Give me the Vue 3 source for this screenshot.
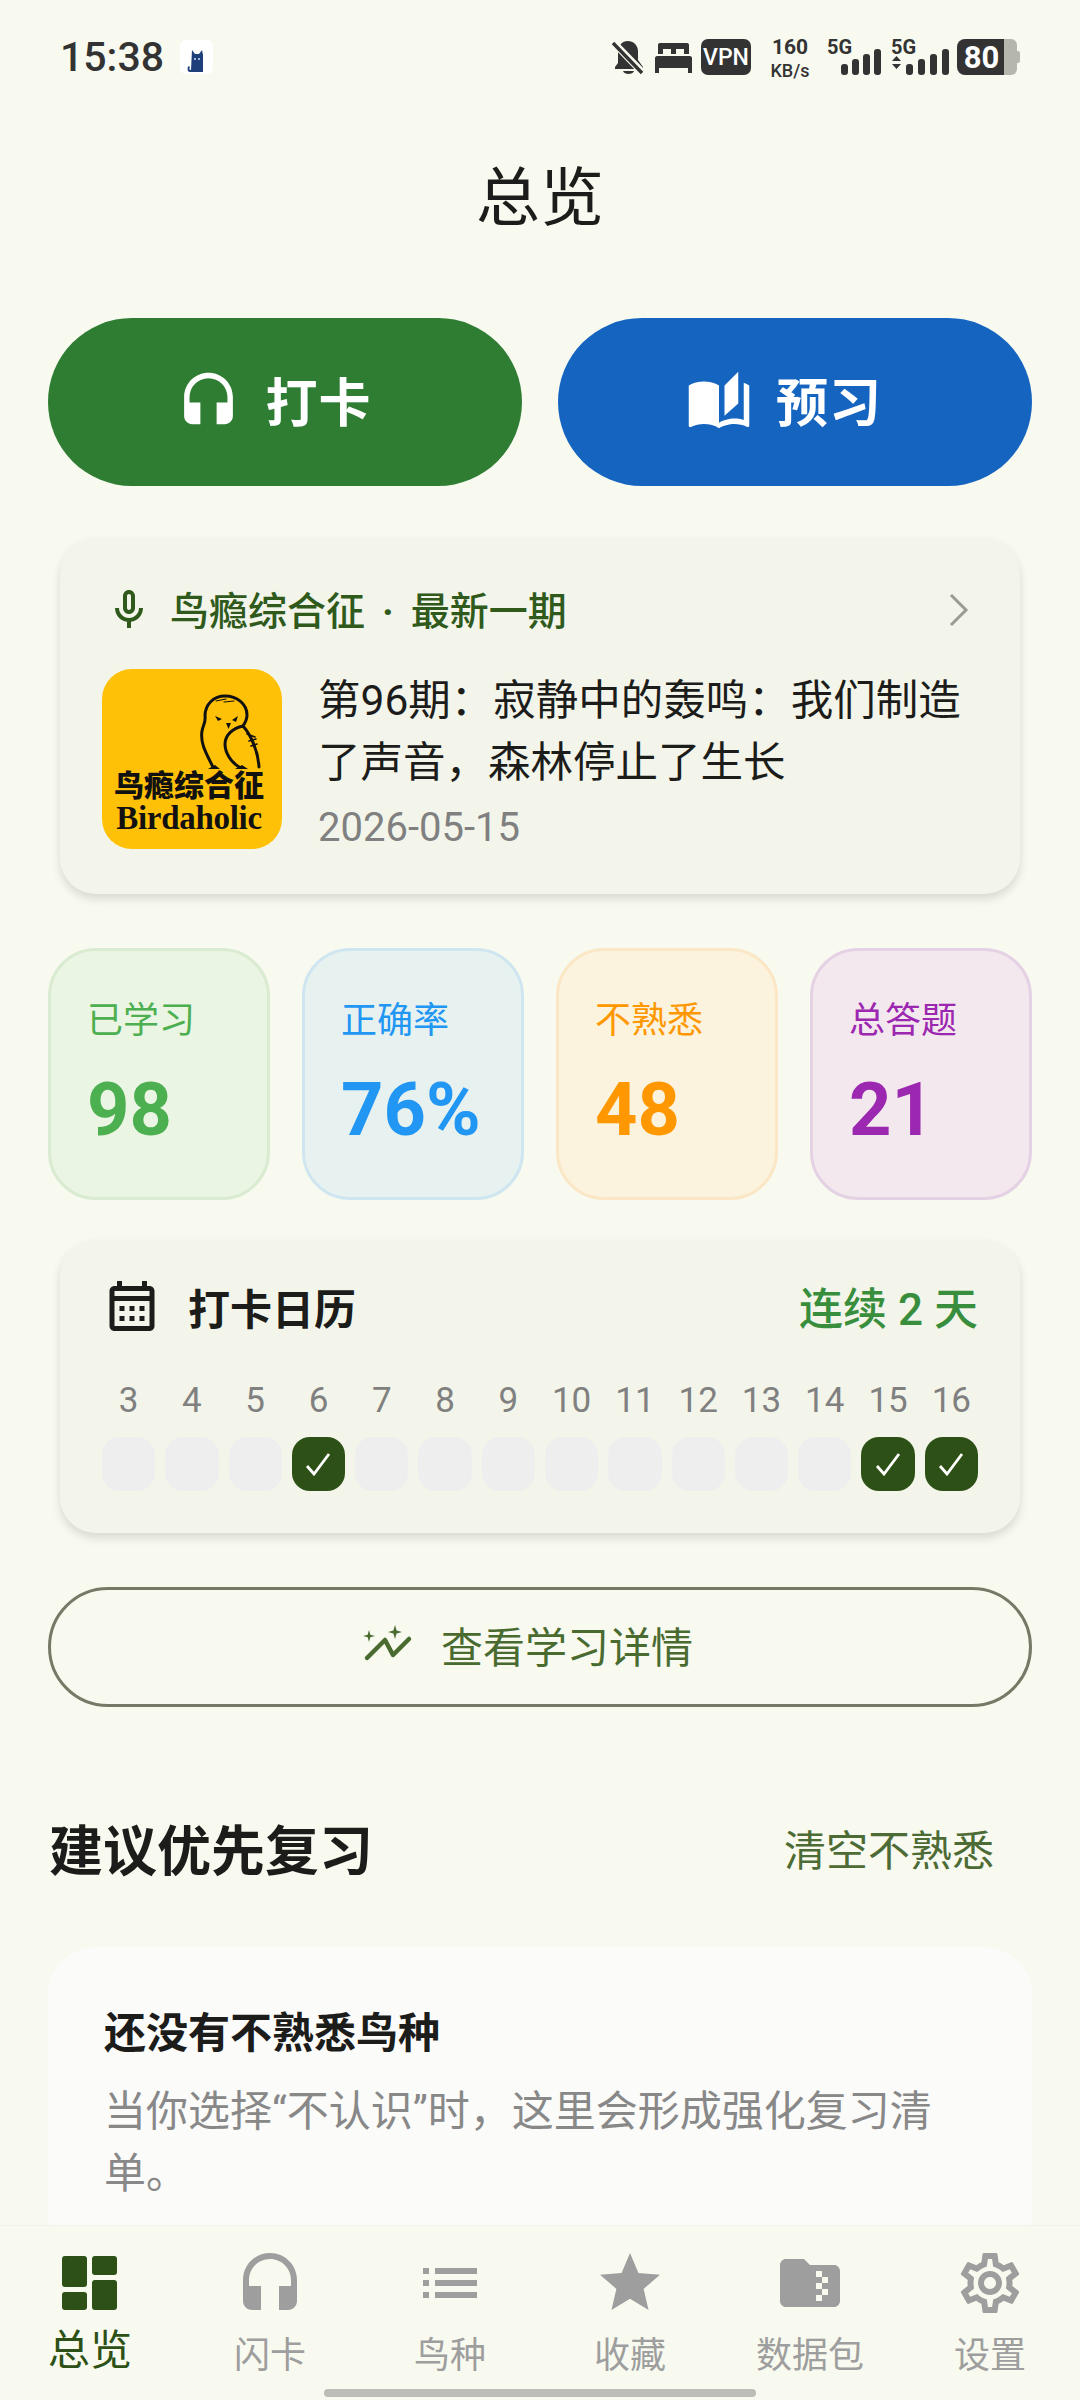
<template>
  <div class="page">
    <div class="status">
      <span class="time">15:38</span>
      <span class="cat">
        <svg width="24" height="28" viewBox="0 0 24 28"><path d="M7 4l3 4h4l3-4 1 5v17H5c-3 0-3-5-1-6l1 1c-1 1-1 3 1 3z" fill="#1f3f7a" /><circle cx="10" cy="13" r="1" fill="#cfe0ff" /><circle cx="14" cy="13" r="1" fill="#cfe0ff" /></svg>
      </span>
      <span class="status-right">
        <svg class="s-bell" width="36" height="37" viewBox="0 0 34 37"><path d="M17 2c5 0 10 4 10 10v9l5 7v2H4v-2l3-4v-12c0-5 4-10 10-10z" fill="#333" /><path d="M12 32h11c-1 4-10 4-11 0z" fill="#333" /><path d="M2 3l30 31" stroke="#f8faf0" stroke-width="7" /><path d="M2 4l29 30" stroke="#333" stroke-width="3.4" /></svg>
        <svg class="s-bed" width="37" height="31" viewBox="0 0 37 31"><path d="M5 1h27c1.500 0 2 1 2 2v9h-5V7h-8v5h-5V7H8v5H3V3c0-1 .5-2 2-2z" fill="#333" /><path d="M2 14h33c1 0 2 1 2 2v15h-4v-5H4v5H0V16c0-1 1-2 2-2z" fill="#333" /></svg>
        <span class="vpn">VPN</span>
        <span class="speed"><b>160</b><i>KB/s</i></span>
        <span class="signal first">
          <em>5G</em>
          <svg width="41" height="26" viewBox="0 0 41 26"><rect x="1" y="15" width="7" height="11" rx="3" /><rect x="12" y="10" width="7" height="16" rx="3" /><rect x="23" y="5" width="7" height="21" rx="3" /><rect x="34" y="0" width="7" height="26" rx="3" /></svg>
        </span>
        <span class="signal second">
          <em>5G</em>
          <svg width="61" height="26" viewBox="0 0 61 26"><path d="M1 12l4.500-5 4.500 5zM1 15l4.500 5 4.500-5z" /><rect x="15" y="15" width="7" height="11" rx="3" /><rect x="27" y="10" width="7" height="16" rx="3" /><rect x="39" y="5" width="7" height="21" rx="3" /><rect x="51" y="0" width="7" height="26" rx="3" /></svg>
        </span>
        <span class="battery"><span class="level">80</span><span class="rest"></span><span class="tip"></span></span>
      </span>
    </div>

    <div class="content">
      <h1 class="title">总览</h1>

      <div class="actions">
        <button class="action green-btn">
          <svg width="65" height="65" viewBox="0 0 24 24"><path :d="headphones" fill="#fff" /></svg>
          <span>打卡</span>
        </button>
        <button class="action blue-btn">
          <svg width="66" height="66" viewBox="0 0 24 24"><path d="M19 1l-5 5v11l5-4.500V1zM1 6v14.650c0 .25.25.5.5.5.1 0 .15-.05.25-.05C3.100 20.450 5.050 20 6.500 20c1.950 0 4.050.4 5.500 1.500V6c-1.450-1.100-3.550-1.500-5.500-1.500S2.450 4.900 1 6zm22 13.500V6c-.6-.45-1.250-.75-2-1v13.500c-1.100-.35-2.300-.5-3.500-.5-1.700 0-4.150.65-5.500 1.500v2c1.350-.85 3.800-1.500 5.500-1.500 1.650 0 3.350.3 4.750 1.050.1.05.15.05.25.05.25 0 .5-.25.5-.5v-1.100z" fill="#fff" /></svg>
          <span>预习</span>
        </button>
      </div>

      <section class="card podcast">
        <div class="podcast-head">
          <svg width="48" height="48" viewBox="0 0 24 24"><path d="M12 14c1.660 0 3-1.340 3-3V5c0-1.660-1.340-3-3-3S9 3.340 9 5v6c0 1.660 1.340 3 3 3zm-1-9c0-.55.45-1 1-1s1 .45 1 1v6c0 .55-.45 1-1 1s-1-.45-1-1V5zm6 6c0 2.760-2.240 5-5 5s-5-2.240-5-5H5c0 3.530 2.610 6.430 6 6.920V21h2v-3.080c3.390-.49 6-3.390 6-6.920h-2z" fill="#2f5a1c" /></svg>
          <span class="podcast-name">鸟瘾综合征<span class="dot">·</span>最新一期</span>
          <svg class="chevron" width="22" height="36" viewBox="0 0 22 36"><path d="M3 3l15 15L3 33" fill="none" stroke="#9a9c94" stroke-width="3" /></svg>
        </div>
        <div class="episode">
          <div class="cover">
            <svg class="owl" width="180" height="100" viewBox="0 0 180 100">
              <g fill="none" stroke="#111" stroke-width="3" stroke-linecap="round">
                <path d="M111 98C104 84 98 74 100 62c1-6 4-9 3-15C103 35 112 27 123 27c12 0 22 8 22 19 0 4-2 8-4 11 8 9 15 25 16 41" />
                <path d="M141 57c-10 2-18 9-18 18 0 9 6 18 14 23" />
                <path d="M145 65l8 3M147 72l7-2M149 77l6-2" stroke-width="1.600" />
                <path d="M114 32l10-2M122 33l10-1" stroke-width="1.200" />
              </g>
              <path d="M113 47l7 3-4 2zM136 47l-6 4 4 2zM124 54h5l-2.500 6z" fill="#111" />
              <path d="M106 100l7-4 5 4zM133 100l7-4 6 4z" fill="#111" />
            </svg>
            <span class="cover-cn">鸟瘾综合征</span>
            <span class="cover-en">Birdaholic</span>
          </div>
          <div class="episode-text">
            <div class="episode-title">第96期&#xFF1A;寂静中的轰鸣&#xFF1A;我们制造了声音&#xFF0C;森林停止了生长</div>
            <div class="episode-date">2026-05-15</div>
          </div>
        </div>
      </section>

      <div class="stats">
        <div v-for="s in stats" :key="s.label" class="stat" :class="s.cls">
          <div class="stat-label">{{ s.label }}</div>
          <div class="stat-value">{{ s.value }}</div>
        </div>
      </div>

      <section class="card calendar">
        <div class="cal-head">
          <svg width="60" height="60" viewBox="0 0 24 24"><path fill-rule="evenodd" d="M19 4h-1V2h-2v2H8V2H6v2H5c-1.100 0-2 .9-2 2v14c0 1.100.9 2 2 2h14c1.100 0 2-.9 2-2V6c0-1.100-.9-2-2-2zM5 6h14v2H5zM5 10h14v10H5zM9 14H7v-2h2v2zm4 0h-2v-2h2v2zm4 0h-2v-2h2v2zm-8 4H7v-2h2v2zm4 0h-2v-2h2v2zm4 0h-2v-2h2v2z" fill="#1c1c1a" /></svg>
          <span class="cal-title">打卡日历</span>
          <span class="streak">连续 2 天</span>
        </div>
        <div class="days">
          <span v-for="d in days" :key="d" class="day-num">{{ d }}</span>
          <span v-for="d in days" :key="'c' + d" class="day-cell" :class="{ done: checked.includes(d) }">
            <svg v-if="checked.includes(d)" width="26" height="24" viewBox="0 0 26 24"><path d="M2 14l7 8L24 2" fill="none" stroke="#fff" stroke-width="2.800" /></svg>
          </span>
        </div>
      </section>

      <button class="detail">
        <svg width="50" height="38" viewBox="0 0 50 38">
          <path d="M4 33L22 15l8 15L46 14" fill="none" stroke="#4a6b30" stroke-width="4.500" stroke-linecap="round" stroke-linejoin="round" />
          <path d="M6 5l1.300 4.700L12 11l-4.700 1.300L6 17l-1.300-4.700L0 11l4.700-1.300zM32 0l1.600 5.400L39 7l-5.400 1.600L32 14l-1.600-5.400L25 7l5.400-1.600z" fill="#4a6b30" />
        </svg>
        <span>查看学习详情</span>
      </button>

      <div class="section-head">
        <h2>建议优先复习</h2>
        <span class="clear">清空不熟悉</span>
      </div>

      <section class="empty">
        <div class="empty-title">还没有不熟悉鸟种</div>
        <p>当你选择“不认识”时&#xFF0C;这里会形成强化复习清单&#x3002;</p>
      </section>
    </div>

    <nav class="nav">
      <div v-for="(n, i) in nav" :key="n.label" class="nav-item" :class="{ active: i === 0 }">
        <svg width="72" height="72" viewBox="0 0 72 72" v-if="i === 0">
          <g fill="#2d5016"><rect x="8" y="9" width="25" height="31" rx="3" /><rect x="8" y="45" width="25" height="18" rx="3" /><rect x="38" y="9" width="25" height="19" rx="3" /><rect x="38" y="33" width="25" height="30" rx="3" /></g>
        </svg>
        <svg v-else width="72" height="72" viewBox="0 0 24 24"><path :d="n.icon" :transform="n.shift" fill="#9e9e9e" fill-rule="evenodd" /></svg>
        <span>{{ n.label }}</span>
      </div>
    </nav>
    <div class="home-bar"></div>
  </div>
</template>

<script setup>
const headphones = "M12 1c-5 0-9 4-9 9v7c0 1.660 1.340 3 3 3h3v-8H5v-2c0-3.870 3.130-7 7-7s7 3.130 7 7v2h-4v8h3c1.660 0 3-1.340 3-3v-7c0-5-4-9-9-9z";

const stats = [
  { label: "已学习", value: "98", cls: "s-green" },
  { label: "正确率", value: "76%", cls: "s-blue" },
  { label: "不熟悉", value: "48", cls: "s-orange" },
  { label: "总答题", value: "21", cls: "s-purple" },
];

const days = [3, 4, 5, 6, 7, 8, 9, 10, 11, 12, 13, 14, 15, 16];
const checked = [6, 15, 16];

const nav = [
  { label: "总览" },
  { label: "闪卡", icon: headphones, shift: "translate(0 1)" },
  { label: "鸟种", icon: "M3 13h2v-2H3v2zm0 4h2v-2H3v2zm0-8h2V7H3v2zm4 4h14v-2H7v2zm0 4h14v-2H7v2zM7 7v2h14V7H7z" },
  { label: "收藏", icon: "M12 17.270L18.180 21l-1.640-7.030L22 9.240l-7.190-.61L12 2 9.190 8.630 2 9.240l5.460 4.730L5.820 21z" },
  { label: "数据包", icon: "M20 6h-8l-2-2H4c-1.100 0-2 .9-2 2v12c0 1.100.9 2 2 2h16c1.100 0 2-.9 2-2V8c0-1.100-.9-2-2-2zm-2 6h-2v2h2v2h-2v2h-2v-2h2v-2h-2v-2h2v-2h-2V8h2v2h2v2z" },
  { label: "设置", icon: "M19.430 12.980c.04-.32.07-.64.07-.98 0-.34-.03-.66-.07-.98l2.110-1.650c.19-.15.24-.42.12-.64l-2-3.460c-.09-.16-.26-.25-.44-.25-.06 0-.12.01-.17.03l-2.490 1c-.52-.4-1.080-.73-1.690-.98l-.38-2.650C14.460 2.180 14.250 2 14 2h-4c-.25 0-.46.18-.49.42l-.38 2.650c-.61.25-1.170.59-1.690.98l-2.490-1c-.06-.02-.12-.03-.18-.03-.17 0-.34.09-.43.25l-2 3.460c-.13.22-.07.49.12.64l2.110 1.650c-.04.32-.07.65-.07.98 0 .33.03.66.07.98l-2.110 1.650c-.19.15-.24.42-.12.64l2 3.460c.09.16.26.25.44.25.06 0 .12-.01.17-.03l2.490-1c.52.4 1.080.73 1.690.98l.38 2.650c.03.24.24.42.49.42h4c.25 0 .46-.18.49-.42l.38-2.650c.61-.25 1.170-.59 1.690-.98l2.490 1c.06.02.12.03.18.03.17 0 .34-.09.43-.25l2-3.460c.12-.22.07-.49-.12-.64l-2.110-1.650zm-1.980-1.710c.04.31.05.52.05.73 0 .21-.02.43-.05.73l-.14 1.130.89.7 1.080.84-.7 1.210-1.270-.51-1.040-.42-.9.68c-.43.32-.84.56-1.250.73l-1.060.43-.16 1.130-.2 1.350h-1.400l-.19-1.350-.16-1.130-1.060-.43c-.43-.18-.83-.41-1.230-.71l-.91-.7-1.060.43-1.270.51-.7-1.210 1.080-.84.89-.7-.14-1.130c-.03-.31-.05-.54-.05-.74s.02-.43.05-.73l.14-1.130-.89-.7-1.080-.84.7-1.210 1.270.51 1.040.42.9-.68c.43-.32.84-.56 1.250-.73l1.060-.43.16-1.130.2-1.350h1.390l.19 1.350.16 1.130 1.060.43c.43.18.83.41 1.230.71l.91.7 1.060-.43 1.270-.51.7 1.210-1.070.85-.89.7.14 1.130zM12 8c-2.210 0-4 1.790-4 4s1.790 4 4 4 4-1.790 4-4-1.790-4-4-4zm0 6c-1.100 0-2-.9-2-2s.9-2 2-2 2 .9 2 2-.9 2-2 2z" },
];
</script>

<style>
html, body {
  margin: 0;
  background: #f8faf0;
}
</style>

<style scoped>
.page {
  position: relative;
  display: flex;
  flex-direction: column;
  width: 1080px;
  height: 2400px;
  overflow: hidden;
  background: #f8faf0;
  color: #1c1c1a;
  font-family: Roboto, "Noto Sans CJK SC", sans-serif;
}

/* status bar */
.status {
  display: flex;
  align-items: center;
  flex: none;
  height: 114px;
  padding: 0 60px;
  box-sizing: border-box;
  color: #333;
}
.time {
  font-size: 41px;
  font-weight: 500;
  width: 120px;
}
.cat {
  display: flex;
  align-items: flex-end;
  justify-content: center;
  width: 33px;
  height: 34px;
  background: #fff;
  border-radius: 6px;
}
.status-right {
  display: flex;
  align-items: center;
  margin-left: auto;
}
.s-bed {
  margin-left: 9px;
}
.vpn {
  display: flex;
  align-items: center;
  justify-content: center;
  width: 50px;
  height: 36px;
  margin-left: 9px;
  background: #333;
  border-radius: 7px;
  color: #fff;
  font-size: 23px;
  font-weight: 500;
}
.speed {
  display: flex;
  flex-direction: column;
  align-items: center;
  width: 44px;
  margin: 3px 0 0 17px;
  line-height: 23px;
}
.speed b {
  font-size: 21px;
  font-weight: 700;
}
.speed i {
  font-size: 18px;
  font-style: normal;
  font-weight: 500;
}
.signal {
  position: relative;
  display: flex;
  align-items: flex-end;
  justify-content: flex-end;
  height: 36px;
  fill: #333;
}
.signal em {
  position: absolute;
  left: 0;
  top: 0;
  font-size: 20px;
  font-style: normal;
  font-weight: 700;
  line-height: 16px;
}
.signal.first {
  width: 54px;
  margin-left: 15px;
}
.signal.second {
  width: 61px;
  margin-left: 10px;
}
.battery {
  display: flex;
  align-items: center;
  width: 63px;
  height: 36px;
  margin-left: 5px;
}
.level {
  display: flex;
  align-items: center;
  justify-content: center;
  width: 47px;
  height: 36px;
  padding-left: 2px;
  box-sizing: border-box;
  background: #333;
  border-radius: 8px 0 0 8px;
  color: #fff;
  font-size: 31px;
  font-weight: 700;
}
.rest {
  width: 13px;
  height: 36px;
  background: #b5b6ae;
  border-radius: 0 6px 6px 0;
}
.tip {
  width: 3px;
  height: 12px;
  background: #b5b6ae;
  border-radius: 0 2px 2px 0;
}

.content {
  flex: 1;
  min-height: 0;
  overflow: hidden;
}
.title {
  display: flex;
  align-items: center;
  justify-content: center;
  height: 156px;
  margin: 0;
  padding-bottom: 8px;
  font-size: 64px;
  font-weight: 400;
}

/* big buttons */
.actions {
  display: flex;
  gap: 36px;
  margin-top: 40px;
  padding: 0 48px;
}
.action {
  display: flex;
  align-items: center;
  justify-content: center;
  gap: 24px;
  flex: 1;
  height: 168px;
  padding: 0 22px 0 0;
  border: 0;
  border-radius: 84px;
  color: #fff;
  font-family: inherit;
  font-size: 52px;
  font-weight: 700;
  letter-spacing: 1px;
}
.action span {
  margin-bottom: 6px;
}
.green-btn {
  background: #2e7d32;
}
.blue-btn {
  background: #1565c0;
}

.card {
  margin: 0 60px;
  box-sizing: border-box;
  background: #f3f5ea;
  border-radius: 36px;
  box-shadow: 0 5px 10px rgba(0, 0, 0, 0.13);
}

/* latest episode */
.podcast {
  margin-top: 52px;
  height: 356px;
  padding: 48px 42px 0;
}
.podcast-head {
  display: flex;
  align-items: center;
  height: 48px;
}
.podcast-head svg:first-child {
  margin-left: 3px;
}
.podcast-name {
  margin-left: 17px;
  margin-bottom: 5px;
  color: #2f5a1c;
  font-size: 39px;
  font-weight: 500;
}
.dot {
  margin: 0 17px;
  font-weight: 700;
}
.chevron {
  margin-left: auto;
  margin-right: 8px;
}
.episode {
  display: flex;
  gap: 36px;
  margin-top: 35px;
}
.cover {
  display: flex;
  flex-direction: column;
  align-items: center;
  flex: none;
  width: 180px;
  height: 180px;
  background: #ffc107;
  border-radius: 30px;
  color: #111;
  overflow: hidden;
}
.owl {
  flex: none;
}
.cover-cn {
  margin-top: 1px;
  margin-right: 6px;
  font-size: 30px;
  font-weight: 900;
  line-height: 32px;
  white-space: nowrap;
}
.cover-en {
  margin-right: 6px;
  font-family: "Liberation Serif", serif;
  font-size: 33px;
  font-weight: 700;
  line-height: 32px;
  letter-spacing: -0.3px;
}
.episode-text {
  flex: 1;
  margin-top: 1px;
}
.episode-title {
  font-size: 42.5px;
  line-height: 62px;
}
.episode-date {
  margin-top: 9px;
  color: #808080;
  font-size: 40px;
  line-height: 50px;
}

/* stat tiles */
.stats {
  display: flex;
  gap: 32px;
  margin-top: 54px;
  padding: 0 48px;
}
.stat {
  flex: 1;
  height: 252px;
  padding: 48px 0 0 36px;
  box-sizing: border-box;
  border: 3px solid;
  border-radius: 48px;
}
.stat-label {
  font-size: 36px;
  line-height: 44px;
}
.stat-value {
  margin-top: 27px;
  font-size: 74px;
  font-weight: 700;
  line-height: 80px;
}
.s-green {
  background: #eaf5e3;
  border-color: #d9ebd1;
  color: #4caf50;
}
.s-blue {
  background: #e7f2f0;
  border-color: #cfe6f0;
  color: #2196f3;
}
.s-orange {
  background: #fbf3de;
  border-color: #fbe6c6;
  color: #ff9800;
}
.s-purple {
  background: #f3e8ee;
  border-color: #e5d1e4;
  color: #9c27b0;
}

/* calendar */
.calendar {
  margin-top: 40px;
  height: 293px;
  padding: 41px 42px 0;
}
.cal-head {
  display: flex;
  align-items: center;
  height: 50px;
}
.cal-title {
  margin-left: 26px;
  font-size: 42px;
  font-weight: 700;
}
.streak {
  margin-left: auto;
  color: #388e3c;
  font-size: 44px;
  font-weight: 500;
}
.days {
  display: grid;
  grid-template-columns: repeat(14, 1fr);
  column-gap: 10px;
  row-gap: 14px;
  margin-top: 48px;
}
.day-num {
  color: #808080;
  font-size: 35px;
  line-height: 44px;
  text-align: center;
}
.day-cell {
  display: flex;
  align-items: center;
  justify-content: center;
  height: 54px;
  background: #eeeeee;
  border-radius: 18px;
}
.day-cell.done {
  background: #2d5016;
}

/* detail button */
.detail {
  display: flex;
  align-items: center;
  justify-content: center;
  gap: 28px;
  width: 984px;
  height: 120px;
  margin: 54px 48px 0;
  padding: 0 24px 6px 0;
  background: transparent;
  border: 3px solid #757a66;
  border-radius: 60px;
  color: #4a6b30;
  font-family: inherit;
  font-size: 42px;
}
.section-head {
  display: flex;
  align-items: center;
  justify-content: space-between;
  height: 80px;
  margin-top: 100px;
  padding: 0 86px 0 49px;
}
.section-head h2 {
  margin: 0;
  font-size: 54px;
  font-weight: 700;
}
.clear {
  color: #4d6b35;
  font-size: 42px;
}

/* empty state, runs under the nav */
.empty {
  margin: 60px 48px 0;
  padding: 55px 56px 60px;
  background: #fbfbfa;
  border-radius: 48px;
}
.empty-title {
  font-size: 42px;
  font-weight: 700;
  line-height: 64px;
}
.empty p {
  margin: 15px 0 0;
  color: #888;
  font-size: 42px;
  line-height: 62px;
}

/* bottom nav */
.nav {
  display: flex;
  flex: none;
  height: 175px;
  background: #f8faf0;
  border-top: 1px solid #f1f3e9;
  box-sizing: border-box;
  padding-top: 21px;
}
.nav-item {
  display: flex;
  flex-direction: column;
  align-items: center;
  flex: 1;
  color: #9e9e9e;
  font-size: 36px;
  line-height: 44px;
}
.nav-item span {
  margin-top: 15px;
}
.nav-item.active {
  color: #2d5016;
  font-size: 42px;
}
.nav-item.active span {
  margin-top: 10px;
}
.home-bar {
  position: absolute;
  left: 324px;
  bottom: 3px;
  width: 432px;
  height: 8px;
  background: #bcbdb6;
  border-radius: 4px;
}
</style>
